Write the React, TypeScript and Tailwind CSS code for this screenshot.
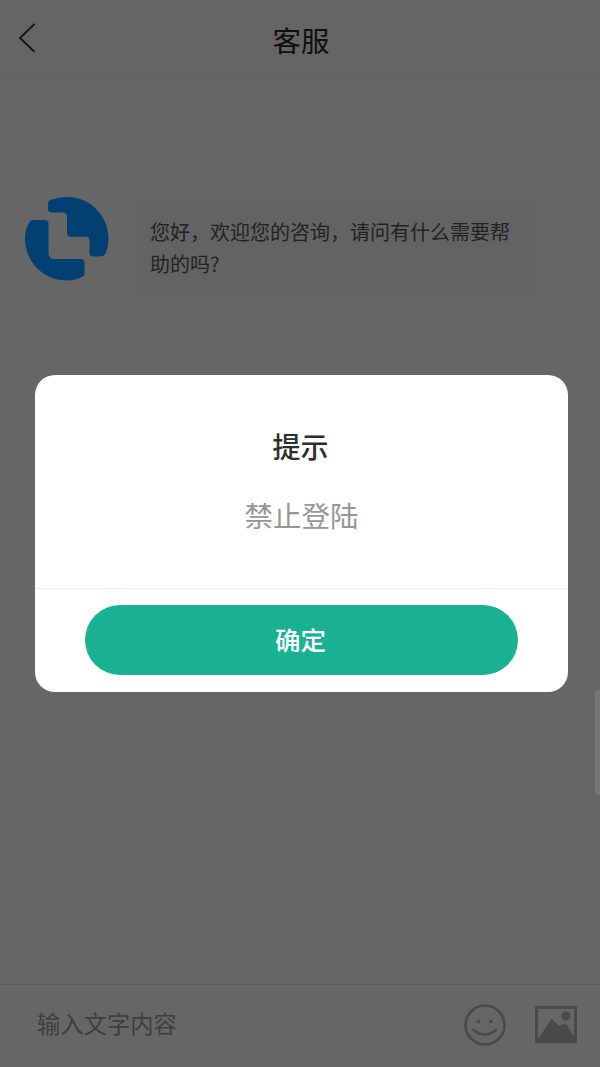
export default function App() {
  return (
    <div className="relative flex h-[1067px] w-[600px] flex-col overflow-hidden bg-[#666666] font-['Noto_Sans_CJK_SC','Noto_Sans',sans-serif]">
      <header className="relative flex h-[79px] shrink-0 items-center justify-center border-b border-[#616161] bg-[#656565]">
        <svg className="absolute left-[18px] top-[23px]" width="18" height="30" viewBox="0 0 18 30" fill="none">
          <path d="M16.5 0.8 L2 15 L16.5 28.8" stroke="#111111" strokeWidth="1.8" />
        </svg>
        <h1 className="pl-[2px] pt-[2px] text-[28.5px] leading-[40px] text-[#0f0f0f]">客服</h1>
      </header>

      <main className="flex flex-1 items-start gap-[26px] pl-[25px] pt-[118px]">
        <svg className="shrink-0" width="84" height="84" viewBox="0 0 84 84">
          <path
            fill="#004073"
            d="M23 7 Q23 3.5 27 2.6 C33 0.8 37 0 42 0 C65 0 83.5 18.5 83.5 41.5 C83.5 47 82.5 52 80.5 56.5 Q79 59.5 74 59.5 L68 59.5 Q64.5 59.5 64.5 56 L64.5 43.5 Q64.5 39.7 60.5 39.7 L46 39.7 Q42 39.7 42 36 L42 19.5 Q42 15.5 38 15.5 L27 15.5 Q23 15.5 23 12 Z"
          />
          <path
            fill="#004073"
            d="M3.5 27 Q5 23 9 23 L19.5 23 Q23.5 23 23.5 27 L23.5 56 Q23.5 62 29.5 62 L55.5 62 Q59.5 62 59.5 66 L59.5 76 Q59.5 79.5 56 80.5 C51 82.5 47 83.5 42 83.5 C18.5 83.5 0 64.5 0 41.5 C0 36 1 32 3.5 27 Z"
          />
        </svg>
        <div className="mt-[3px] h-[96px] w-[400px] rounded-[4px] bg-[#636363] px-[15px] py-[16px] text-[20px] leading-[32px] text-[#222222]">
          您好，欢迎您的咨询，请问有什么需要帮助的吗?
        </div>
      </main>

      <footer className="flex h-[83px] shrink-0 items-start border-t border-[#5c5c5c] bg-[#666666] pl-[37px] pr-[23px] pt-[19px]">
        <span className="flex-1 text-[23.3px] leading-[38px] text-[#3e3e3e]">输入文字内容</span>
        <svg className="mr-[29px]" width="42" height="42" viewBox="0 0 42 42" fill="none">
          <circle cx="21" cy="21" r="19.5" stroke="#4a4a4a" strokeWidth="2.6" />
          <circle cx="14.4" cy="17.5" r="1.8" fill="#4a4a4a" />
          <circle cx="26.8" cy="17.5" r="1.8" fill="#4a4a4a" />
          <path d="M9.5 26 Q20.5 35 32 26" stroke="#4a4a4a" strokeWidth="2.6" strokeLinecap="round" />
        </svg>
        <svg className="mt-[2px]" width="42" height="37" viewBox="0 0 42 37">
          <path
            fill="#4a4a4a"
            fillRule="evenodd"
            d="M1.5 0 H40.5 Q42 0 42 1.5 V35.5 Q42 37 40.5 37 H1.5 Q0 37 0 35.5 V1.5 Q0 0 1.5 0 Z M3 3 V33 L16.7 12.7 L24 20 L31 17.5 L39 31 V3 Z"
          />
          <circle cx="31" cy="10" r="4.5" fill="#4a4a4a" />
        </svg>
      </footer>

      <div className="absolute right-0 top-[690px] h-[105px] w-[5px] rounded-l-[4px] bg-[#767676]" />

      <div className="absolute left-[35px] top-[375px] flex h-[317px] w-[533px] flex-col rounded-[20px] bg-white">
        <div className="flex h-[214px] flex-col items-center border-b border-[#eeeeee]">
          <h2 className="mt-[51px] pr-[2px] text-[28px] font-medium leading-[40px] text-[#2e2e2e]">提示</h2>
          <p className="mt-[29px] text-[28.5px] leading-[40px] text-[#969696]">禁止登陆</p>
        </div>
        <div className="flex flex-1 items-start justify-center pt-[16px]">
          <button className="flex h-[70px] w-[433px] items-center justify-center rounded-full bg-[#1ab192] pb-[2px] pr-[2px] text-[25.5px] font-medium text-white">
            确定
          </button>
        </div>
      </div>
    </div>
  );
}
